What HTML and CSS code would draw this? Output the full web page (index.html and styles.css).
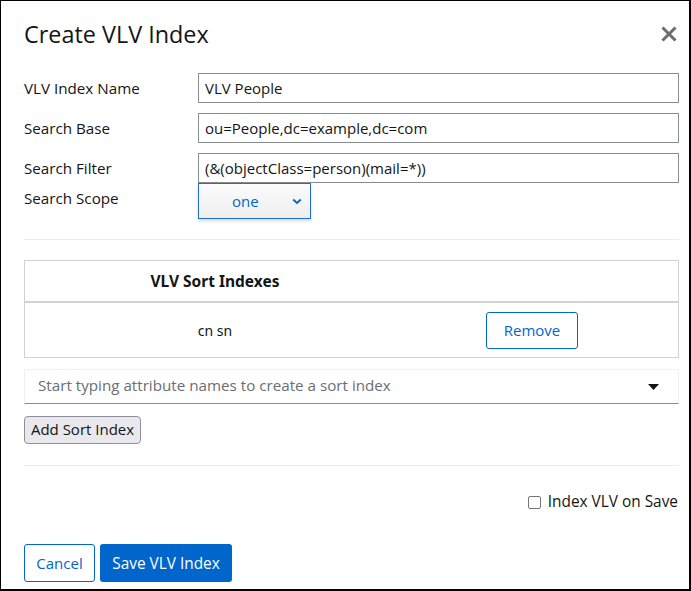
FILE: index.html
```html
<!DOCTYPE html>
<html lang="en">
<head>
<meta charset="utf-8">
<title>Create VLV Index</title>
<link rel="stylesheet" href="styles.css">
</head>
<body>
<div class="modal">
  <header class="head">
    <h1 class="title">Create VLV Index</h1>
    <button class="close" aria-label="Close">
      <svg width="18" height="18" viewBox="0 0 18 18"><path d="M2.5 2.5 L15.5 15.5 M15.5 2.5 L2.5 15.5" stroke="#6a6e73" stroke-width="3" stroke-linecap="butt"/></svg>
    </button>
  </header>
  <div class="body">
    <div class="form">
      <label class="lbl">VLV Index Name</label>
      <input class="inp" type="text" value="VLV People">
      <label class="lbl">Search Base</label>
      <input class="inp" type="text" value="ou=People,dc=example,dc=com">
      <label class="lbl">Search Filter</label>
      <input class="inp" type="text" value="(&amp;(objectClass=person)(mail=*))">
      <label class="lbl lbl-scope">Search Scope</label>
      <div class="scope">
        <select class="sel"><option>one</option></select>
        <svg class="chev" width="10" height="7" viewBox="0 0 10 7"><path d="M1.2 1.5 L5 5 L8.8 1.5" fill="none" stroke="#0066cc" stroke-width="1.8"/></svg>
      </div>
    </div>
    <div class="sep sep1"></div>
    <div class="tbl">
      <div class="th">VLV Sort Indexes</div>
      <div class="th-empty"></div>
      <div class="td">cn sn</div>
      <div class="td-btn"><button class="btn-outline remove">Remove</button></div>
    </div>
    <div class="typeahead">
      <span class="ph">Start typing attribute names to create a sort index</span>
      <svg class="caret" width="11" height="6" viewBox="0 0 11 6"><path d="M0 0 H11 L5.5 6 Z" fill="#151515"/></svg>
    </div>
    <div class="addrow"><button class="btn-add">Add Sort Index</button></div>
    <div class="sep sep2"></div>
    <div class="checkrow">
      <label class="chk"><span class="box"></span>Index VLV on Save</label>
    </div>
  </div>
  <footer class="foot">
    <button class="btn-outline cancel">Cancel</button>
    <button class="btn-primary">Save VLV Index</button>
  </footer>
</div>
</body>
</html>
```

FILE: styles.css
```css
html, body {
  margin: 0;
  padding: 0;
  background: #fff;
}
body {
  font-family: "Open Sans", "Liberation Sans", sans-serif;
  color: #151515;
}
.modal {
  box-sizing: border-box;
  width: 691px;
  height: 591px;
  border-style: solid;
  border-color: #000;
  border-width: 1px 2px 2px 1px;
  padding: 0 10px 0 23px;
  display: flex;
  flex-direction: column;
}
.head {
  display: flex;
  align-items: center;
  justify-content: space-between;
  padding-top: 17px;
  height: 32px;
}
.title {
  margin: 0;
  font-size: 23.4px;
  font-weight: 400;
  line-height: 32px;
}
.close {
  border: 0;
  background: none;
  padding: 0;
  width: 18px;
  height: 18px;
  margin-right: 1px;
  display: flex;
}
.body {
  display: flex;
  flex-direction: column;
  margin-top: 23px;
}
.form {
  display: grid;
  grid-template-columns: 174px 1fr;
  row-gap: 10px;
  align-items: center;
}
.lbl {
  font-size: 15.2px;
  line-height: 20px;
}
.lbl-scope {
  align-self: start;
  margin-top: -5px;
}
.inp {
  box-sizing: border-box;
  height: 30px;
  width: 100%;
  border: 1px solid #8a8d90;
  border-radius: 0;
  padding: 0 6px;
  font-family: inherit;
  font-size: 15px;
  color: #151515;
  margin: 0;
}
.scope {
  position: relative;
  width: 113px;
  height: 36px;
  margin-top: -10px;
  align-self: start;
}
.sel {
  appearance: none;
  -webkit-appearance: none;
  box-sizing: border-box;
  width: 113px;
  height: 36px;
  border: 1px solid #1f6fcf;
  background: linear-gradient(#fbfbfb, #efefef);
  box-shadow: 0 2px 3px rgba(0,0,0,0.15);
  color: #0066cc;
  font-family: inherit;
  font-size: 15px;
  padding: 0 0 0 33px;
  margin: 0;
  border-radius: 0;
}
.chev {
  position: absolute;
  right: 9px;
  top: 15px;
}
.sep {
  height: 1px;
  background: #ececec;
}
.sep1 { margin-top: 20px; }
.tbl {
  margin-top: 20px;
  display: grid;
  grid-template-columns: 380px 1fr;
  border: 1px solid #d2d2d2;
  width: 655px;
  box-sizing: border-box;
}
.th, .th-empty {
  height: 40px;
  border-bottom: 2px solid #d2d2d2;
}
.th {
  font-family: "Noto Sans", sans-serif;
  font-weight: 700;
  font-size: 15.5px;
  display: flex;
  align-items: center;
  justify-content: center;
}
.td {
  font-family: "Noto Sans", sans-serif;
  font-size: 14px;
  display: flex;
  align-items: center;
  justify-content: center;
  height: 54px;
}
.td-btn {
  display: flex;
  align-items: center;
  padding-left: 81px;
}
.btn-outline {
  box-sizing: border-box;
  background: #fff;
  border: 1px solid #0066cc;
  border-radius: 3px;
  color: #0066cc;
  font-family: inherit;
  font-size: 15px;
  padding: 0;
}
.remove {
  width: 92px;
  height: 37px;
}
.typeahead {
  margin-top: 11px;
  box-sizing: border-box;
  height: 35px;
  width: 655px;
  border: 1px solid #f0f0f0;
  border-bottom: 1px solid #8a8d90;
  display: flex;
  align-items: center;
  justify-content: space-between;
  padding: 0 19px 4px 13px;
}
.ph {
  color: #6a6e73;
  font-size: 15.2px;
}
.caret { margin-top: 5px; }
.addrow {
  margin-top: 12px;
  display: flex;
}
.btn-add {
  box-sizing: border-box;
  height: 28px;
  width: 117px;
  background: #e9e9ed;
  border: 1px solid #8f8f9d;
  border-radius: 4px;
  font-family: inherit;
  font-size: 15px;
  color: #151515;
  padding: 0 0 2px;
}
.sep2 { margin-top: 21px; }
.checkrow {
  display: flex;
  justify-content: flex-end;
  margin-top: 26px;
  padding-right: 1px;
}
.chk {
  display: flex;
  align-items: center;
  font-size: 15.4px;
  line-height: 20px;
}
.box {
  box-sizing: border-box;
  width: 13px;
  height: 13px;
  border: 1px solid #767676;
  border-radius: 2px;
  margin-right: 7px;
}
.foot {
  margin-top: auto;
  margin-bottom: 7px;
  display: flex;
  gap: 5px;
}
.cancel {
  width: 71px;
  height: 38px;
}
.btn-primary {
  box-sizing: border-box;
  width: 132px;
  height: 38px;
  background: #0066cc;
  border: 0;
  border-radius: 3px;
  color: #fff;
  font-family: inherit;
  font-size: 15.4px;
  padding: 0;
}
```
